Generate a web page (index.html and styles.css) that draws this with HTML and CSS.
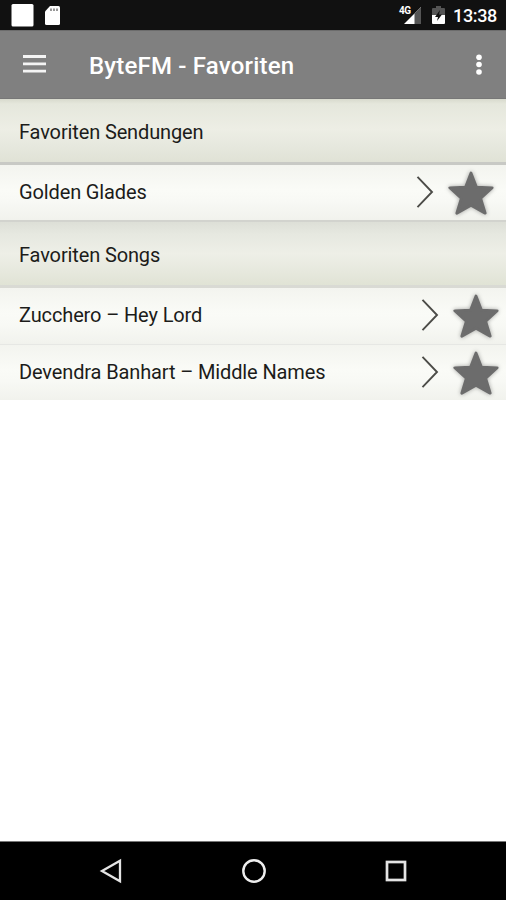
FILE: index.html
```html
<!DOCTYPE html>
<html lang="de">
<head>
<meta charset="utf-8">
<title>ByteFM - Favoriten</title>
<link rel="stylesheet" href="styles.css">
</head>
<body>
<svg width="0" height="0" class="defs" aria-hidden="true">
  <symbol id="chevron" viewBox="0 0 18 34"><path d="M1.5 1.8L16 17L1.5 32.2" fill="none" stroke="#4c4c48" stroke-width="1.9"/></symbol>
  <symbol id="star" viewBox="0 0 46 44"><path d="M23 2L28.500 16.200L44.200 16.800L32.700 27.300L37.200 42.200L23 34.200L8.800 42.200L13.300 27.300L1.800 16.800L17.500 16.200Z" fill="#6c6c6c" stroke="#6c6c6c" stroke-width="2.800" stroke-linejoin="round"/></symbol>
</svg>
<div class="status">
  <svg class="status-left" width="70" height="30" viewBox="0 0 70 30">
    <rect x="11.500" y="4" width="22" height="22.500" rx="1.500" fill="#fff"/>
    <path d="M50 6h8.500q1.500 0 1.500 1.500v16q0 1.500-1.500 1.500H46.500q-1.500 0-1.500-1.500V11.500z" fill="#fff"/>
    <path d="M51 8.500v2.500M54 8.500v2.500M57 8.500v2.500" stroke="#555" stroke-width="1.200"/>
  </svg>
  <div class="status-right">
    <div class="signal">
      <svg width="23" height="20" viewBox="0 0 23 20"><path d="M5 19L22 2V19Z" fill="#fff"/><path d="M15.500 8.500L22 2V19H15.500Z" fill="#555"/></svg>
      <span class="net">4G</span>
    </div>
    <svg class="battery" width="13" height="20" viewBox="0 0 13 20"><path d="M4 1h5v2h3q1 0 1 1v6H0V4q0-1 1-1h3z" fill="#555"/><path d="M0 10h13v8q0 1-1 1H1q-1 0-1-1z" fill="#fff"/><path d="M8 5L3 12H6L5 16L10 9.500H7Z" fill="#111"/></svg>
    <span class="clock">13:38</span>
  </div>
</div>
<header class="bar">
  <svg class="menu" width="23" height="18" viewBox="0 0 23 18"><path d="M0 1.500h23M0 8.800h23M0 16.100h23" stroke="#f4f4f4" stroke-width="2.800"/></svg>
  <h1>ByteFM - Favoriten</h1>
  <svg class="more" width="6" height="22" viewBox="0 0 6 22"><g fill="#fff"><circle cx="3" cy="3.200" r="2.800"/><circle cx="3" cy="10.500" r="2.800"/><circle cx="3" cy="18" r="2.800"/></g></svg>
</header>
<main>
  <h2 class="section first"><span>Favoriten Sendungen</span></h2>
  <div class="row show"><span>Golden Glades</span><svg class="chevron"><use href="#chevron"/></svg><svg class="star"><use href="#star"/></svg></div>
  <h2 class="section second"><span>Favoriten Songs</span></h2>
  <div class="row song"><span>Zucchero – Hey Lord</span><svg class="chevron"><use href="#chevron"/></svg><svg class="star"><use href="#star"/></svg></div>
  <div class="row song last"><span>Devendra Banhart – Middle Names</span><svg class="chevron"><use href="#chevron"/></svg><svg class="star"><use href="#star"/></svg></div>
</main>
<nav class="nav">
  <svg width="24" height="26" viewBox="0 0 24 26"><path d="M21 2.800V23.200L3 13Z" fill="none" stroke="#e4e4e4" stroke-width="2.300"/></svg>
  <svg width="26" height="26" viewBox="0 0 26 26"><circle cx="13" cy="13" r="10.700" fill="none" stroke="#eee" stroke-width="2.400"/></svg>
  <svg width="24" height="26" viewBox="0 0 24 26"><rect x="3" y="4" width="18" height="18" fill="none" stroke="#e4e4e4" stroke-width="2.700"/></svg>
</nav>
</body>
</html>
```
FILE: styles.css
```css
* { box-sizing: border-box; }
body {
  margin: 0;
  height: 900px;
  display: flex;
  flex-direction: column;
  background: #fff;
  color: #1c1c1a;
  font-family: Roboto, sans-serif;
  overflow: hidden;
}
svg { display: block; flex: none; }
.defs { position: absolute; }
h1, h2 { margin: 0; }
.status {
  flex: none;
  height: 30px;
  background: #111;
  display: flex;
  justify-content: space-between;
}
.status-right { display: flex; align-items: center; padding: 1px 10px 0 0; }
.signal { position: relative; width: 23px; }
.signal svg { margin-top: -2px; }
.net {
  position: absolute;
  left: 0;
  top: -1px;
  color: #fff;
  font-size: 10px;
  font-weight: 700;
  line-height: 10px;
  letter-spacing: -0.5px;
}
.battery { margin: -1px 8px 0 10px; }
.clock { color: #fff; font-size: 18px; font-weight: 500; line-height: 30px; width: 43px; white-space: nowrap; letter-spacing: -0.35px; }
.bar {
  flex: none;
  height: 69px;
  background: #808080;
  border-top: 1px solid #6c6c6c;
  border-bottom: 1px solid #777;
  display: flex;
  align-items: center;
  padding: 0 24px 0 23px;
}
.menu { margin-top: -1px; }
.bar h1 {
  margin: 2px auto 0 43px;
  color: #fff;
  font-size: 24px;
  font-weight: 500;
  line-height: 32px;
  letter-spacing: 0.2px;
  white-space: nowrap;
}
.section {
  display: flex;
  align-items: center;
  padding: 2px 0 0 19px;
  font-size: 20px;
  font-weight: 400;
  line-height: 26px;
  letter-spacing: -0.13px;
}
.first {
  height: 66px;
  border-bottom: 3px solid #c8c9c5;
  background: linear-gradient(#d8dacd, #e5e7dc 5px, #edeee5 48%, #e6e8de 75%, #e0e2d6);
}
.second {
  height: 66px;
  border-bottom: 3px solid #d9dad4;
  background: linear-gradient(#dddfd7, #e6e8e0 12px, #eeefe7 50%, #e6e8dd 80%, #e0e3d5);
}
.row {
  display: flex;
  align-items: center;
  height: 57px;
  padding-left: 19px;
  font-size: 20px;
  line-height: 26px;
  letter-spacing: -0.13px;
  background: linear-gradient(#f3f4ef, #fafbf7 45%, #f8f9f5 65%, #f1f2ed);
}
.row span { margin: -2px auto 0 0; white-space: nowrap; }
.show { border-bottom: 2px solid #d2d3ce; padding-right: 12px; }
.song { padding-right: 7px; border-bottom: 1px solid #e6e7e4; }
.last { height: 55px; border-bottom: 0; }
.chevron { width: 18px; height: 34px; margin-top: -2px; }
.star { width: 46px; height: 44px; margin-left: 14px; filter: drop-shadow(0 0 2px rgba(0, 0, 0, .35)); }
.nav {
  flex: none;
  height: 59px;
  margin-top: auto;
  border-top: 1px solid #777;
  background: #000;
  display: flex;
  align-items: center;
  justify-content: space-between;
  padding: 0 98px 0 99px;
}
```
